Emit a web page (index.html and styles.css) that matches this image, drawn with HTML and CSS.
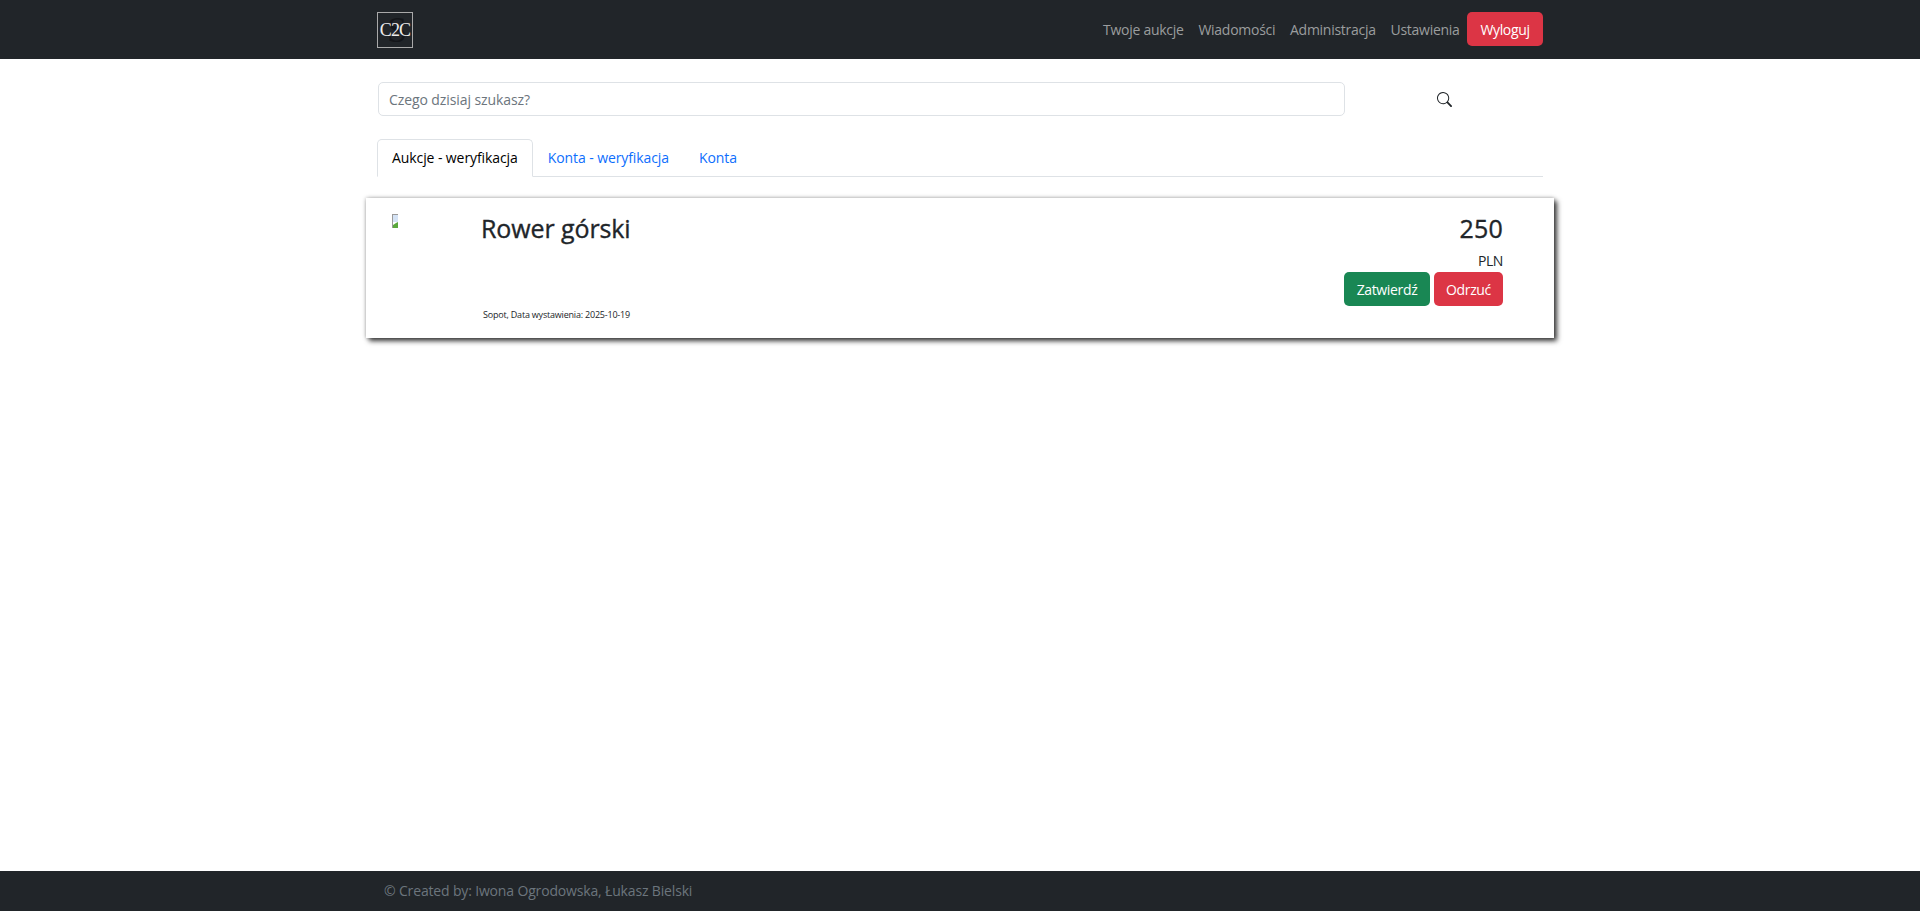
FILE: index.html
```html
<!DOCTYPE html>
<html lang="pl">
<head>
<meta charset="utf-8">
<title>C2C</title>
<link rel="stylesheet" href="styles.css">
</head>
<body>
<header class="navbar">
  <div class="wrap nav-inner">
    <a class="logo"><span class="logo-back">S</span><span class="logo-text">C2C</span></a>
    <nav class="nav-links">
      <a class="nav-link">Twoje aukcje</a>
      <a class="nav-link">Wiadomości</a>
      <a class="nav-link">Administracja</a>
      <a class="nav-link">Ustawienia</a>
      <a class="btn btn-danger">Wyloguj</a>
    </nav>
  </div>
</header>
<main class="main">
  <div class="wrap">
    <div class="search-row">
      <input class="search-input" type="text" placeholder="Czego dzisiaj szukasz?">
      <span class="search-btn">
        <svg width="15" height="15" viewBox="0 0 16 16" fill="currentColor"><path d="M11.742 10.344a6.5 6.5 0 1 0-1.397 1.398h-.001c.03.04.062.078.098.115l3.85 3.85a1 1 0 0 0 1.415-1.414l-3.85-3.85a1.007 1.007 0 0 0-.115-.1zM12 6.5a5.5 5.5 0 1 1-11 0 5.5 5.5 0 0 1 11 0z"/></svg>
      </span>
    </div>
    <ul class="tabs">
      <li class="tab tab-active">Aukcje - weryfikacja</li>
      <li class="tab">Konta - weryfikacja</li>
      <li class="tab">Konta</li>
    </ul>
  </div>
  <article class="card">
    <div class="thumb">
      <svg width="6" height="14" viewBox="0 0 6 14"><rect width="6" height="14" fill="#fff"/><path d="M0 0h6v1H1v13H0z" fill="#9a9a9a"/><rect x="1" y="1" width="5" height="7" fill="#d5e3f5"/><path d="M1 14v-3l3-2 2-1v6z" fill="#5aa83c"/></svg>
    </div>
    <div class="card-body">
      <h2 class="card-title">Rower górski</h2>
      <p class="card-meta">Sopot, Data wystawienia: 2025-10-19</p>
    </div>
    <div class="card-side">
      <div class="price">250</div>
      <div class="currency">PLN</div>
      <div class="actions">
        <a class="btn btn-success">Zatwierdź</a>
        <a class="btn btn-danger">Odrzuć</a>
      </div>
    </div>
  </article>
</main>
<footer class="footer">
  <div class="wrap footer-text">© Created by: Iwona Ogrodowska, Łukasz Bielski</div>
</footer>
</body>
</html>
```
FILE: styles.css
```css
* { box-sizing: border-box; }
html, body { margin: 0; height: 100%; }
body {
  display: flex;
  flex-direction: column;
  min-height: 911px;
  font-family: "Open Sans", "Noto Sans", sans-serif;
  font-size: 14px;
  color: #212529;
  background: #fff;
}
.wrap { width: 1166px; margin-left: 377px; }
.navbar { background: #212529; height: 59px; flex: none; }
.nav-inner { display: flex; align-items: center; justify-content: space-between; height: 59px; }
.logo {
  position: relative;
  display: flex;
  align-items: center;
  justify-content: center;
  width: 36px;
  height: 36px;
  margin-top: 1px;
  border: 1px solid #a9a9a9;
  font-family: "Liberation Serif", serif;
}
.logo-back { position: absolute; left: 9px; top: 0; font-size: 36px; line-height: 34px; color: #14161a; }
.logo-text { position: relative; font-size: 18px; letter-spacing: -.9px; color: #ececec; }
.nav-links { display: flex; align-items: center; }
.nav-link { color: #9b9d9e; padding: 0 7.4px; letter-spacing: -.27px; }
.btn {
  display: inline-flex;
  align-items: center;
  justify-content: center;
  height: 34px;
  border-radius: 5px;
  color: #fff;
  letter-spacing: -.35px;
}
.btn-danger { background: #dc3545; }
.btn-success { background: #198754; }
.nav-links .btn-danger { width: 76px; margin-bottom: 1px; font-weight: 500; }
.main { flex: 1; }
.search-row { display: flex; align-items: center; padding-top: 23px; }
.search-input {
  width: 967px;
  height: 34px;
  margin-left: 1px;
  padding: 0 10px;
  border: 1px solid #dee2e6;
  border-radius: 5px;
  font: inherit;
  letter-spacing: -.09px;
}
.search-input::placeholder { color: #6c757d; opacity: 1; }
.search-btn { display: flex; margin-left: 92px; color: #212529; }
.tabs {
  display: flex;
  list-style: none;
  margin: 23px 0 0;
  padding: 0;
  border-bottom: 1px solid #dee2e6;
}
.tab {
  padding: 8px 14px 0;
  height: 38px;
  margin-bottom: -1px;
  color: #0d6efd;
  letter-spacing: -.09px;
  border: 1px solid transparent;
}
.tab-active {
  color: #000;
  background: #fff;
  border-color: #dee2e6 #dee2e6 #fff;
  border-radius: 5px 5px 0 0;
}
.card {
  display: flex;
  width: 1188px;
  height: 140px;
  margin: 21px 0 0 366px;
  padding: 16px 51px 0 26px;
  box-shadow: 0 0 4px rgba(0,0,0,.3), 3px 3px 5px rgba(0,0,0,.75);
}
.thumb { width: 65px; flex: none; }
.thumb svg { display: block; }
.card-body { flex: 1; display: flex; flex-direction: column; padding-left: 24px; }
.card-title { margin: -1px 0 0; font-size: 25px; line-height: 30px; font-weight: 500; letter-spacing: -.1px; -webkit-text-stroke: .35px #212529; }
.card-meta { margin: 66px 0 0 2px; font-size: 9px; line-height: 12px; letter-spacing: -.2px; color: #212529; }
.card-side { display: flex; flex-direction: column; align-items: flex-end; }
.price { margin-top: -1px; font-size: 25px; line-height: 30px; font-weight: 500; letter-spacing: .2px; -webkit-text-stroke: .35px #212529; }
.currency { margin-top: 9px; line-height: 18px; letter-spacing: -.42px; }
.actions { display: flex; gap: 4px; margin-top: 2px; }
.actions .btn-success { width: 86px; }
.actions .btn-danger { width: 69px; }
.footer { background: #212529; height: 40px; flex: none; display: flex; align-items: center; }
.footer-text { padding: 0 0 2px 7px; color: #6c757d; letter-spacing: -.16px; }
```
